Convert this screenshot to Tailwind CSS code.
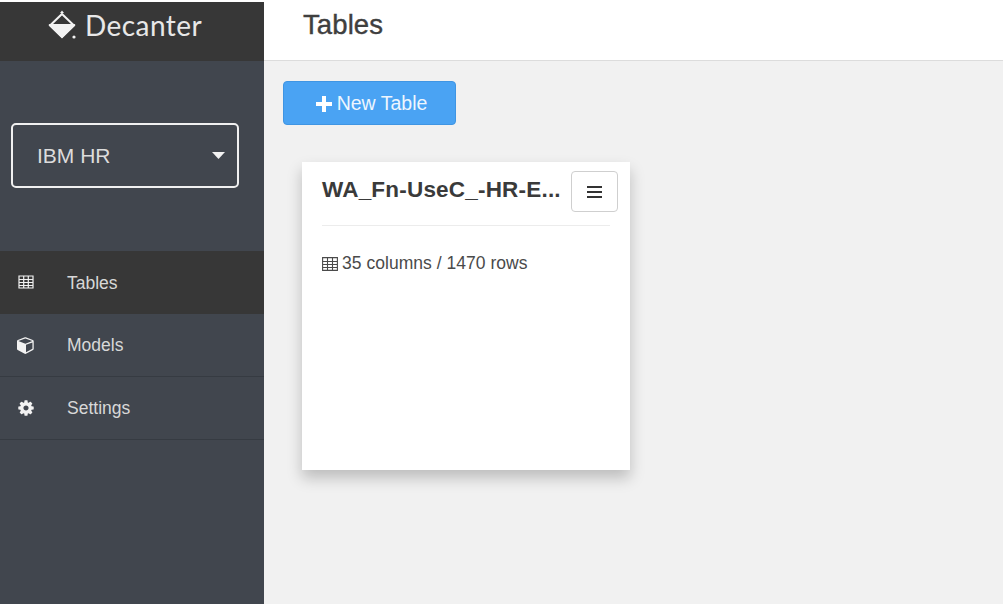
<!DOCTYPE html>
<html lang="en">
<head>
  <meta charset="UTF-8">
  <title>Tables | Decanter</title>
  <script src="https://cdn.jsdelivr.net/npm/@tailwindcss/browser@4"></script>
</head>
<body class="bg-white font-['Liberation_Sans',Arial,sans-serif] text-[#3a3a3a] overflow-hidden">
  <div class="flex h-[604px] pt-[2px]">

    <!-- Sidebar -->
    <aside class="w-[264px] shrink-0 flex flex-col bg-[#41464e] text-[#e4e4e4]">
      <div class="h-[59px] bg-[#373737] flex items-center pl-[47px] gap-[6px] pb-[14px]">
        <svg class="w-[32px] h-[30px]" viewBox="0 0 32 30">
          <path d="M15 4 L27 15.500 L15 27 L3 15.500 Z" fill="none" stroke="#f2f2f2" stroke-width="2"/>
          <path d="M1.500 14 H28.500 L15 28 Z" fill="#f2f2f2"/>
          <path d="M13 3 H17 L15 0.500 Z" fill="#f2f2f2"/>
          <circle cx="27" cy="27" r="1.600" fill="#f2f2f2"/>
        </svg>
        <span class="font-['Lato',sans-serif] text-[28px] leading-none text-[#e8e8e8] tracking-[0.45px]">Decanter</span>
      </div>

      <div class="pt-[62px] pl-[11px] pr-[25px] pb-[63px]">
        <div class="h-[65px] border-2 border-[#f0f0f0] rounded-[5px] flex items-center justify-between pl-[24px] pr-[12px]">
          <span class="text-[21px] text-[#dcdcdc]">IBM HR</span>
          <svg class="w-[13px] h-[7px]" viewBox="0 0 13 7"><path d="M0 0 H13 L6.500 7 Z" fill="#f2f2f2"/></svg>
        </div>
      </div>

      <nav class="text-[17.500px] text-[#d8d8d8]">
        <a class="h-[63px] bg-[#373737] flex items-center pl-[18px] gap-[33px]">
          <svg class="w-[16px] h-[14px] -mt-[1px]" viewBox="0 0 16 14"><path d="M1 1 H15 V13 H1 Z M1 4.500 H15 M1 7.500 H15 M1 10.500 H15 M5.700 1 V13 M10.300 1 V13" fill="none" stroke="#f2f2f2" stroke-width="1.200"/></svg>
          <span class="pt-[1px]">Tables</span>
        </a>
        <a class="h-[63px] border-b border-[#363b42] flex items-center pl-[18px] gap-[33px]">
          <svg class="w-[18px] h-[18px] -ml-[1px] -mr-[1px]" viewBox="0 0 1792 1792" fill="#f2f2f2"><path d="M896 1629l640-349v-636l-640 233v752zm-64-865l698-254-698-254-698 254zm832-252v768q0 35-18 65t-50 47l-704 384q-28 16-61 16t-61-16l-704-384q-32-17-50-47t-18-65v-768q0-40 23-73t61-49l704-256q22-8 44-8t44 8l704 256q38 16 61 49t23 73z"/></svg>
          <span class="pt-[1px]">Models</span>
        </a>
        <a class="h-[63px] border-b border-[#363b42] flex items-center pl-[18px] gap-[33px]">
          <svg class="w-[18px] h-[18px] -ml-[1px] -mr-[1px]" viewBox="0 0 1792 1792" fill="#f2f2f2"><path d="M1152 896q0-106-75-181t-181-75-181 75-75 181 75 181 181 75 181-75 75-181zm512-109v222q0 12-8 23t-20 13l-185 28q-19 54-39 91 35 50 107 138 10 12 10 25t-9 23q-27 37-99 108t-94 71q-12 0-26-9l-138-108q-44 23-91 38-16 136-29 186-7 28-36 28h-222q-14 0-24.500-8.500t-11.500-21.500l-28-184q-49-16-90-37l-141 107q-10 9-25 9-14 0-25-11-126-114-165-168-7-10-7-23 0-12 8-23 15-21 51-66.500t54-70.500q-27-50-41-99l-183-27q-13-2-21-12.500t-8-23.500v-222q0-12 8-23t19-13l186-28q14-46 39-92-40-57-107-138-10-12-10-24 0-10 9-23 26-36 98.500-107.500t94.500-71.500q13 0 26 10l138 107q44-23 91-38 16-136 29-186 7-28 36-28h222q14 0 24.500 8.500t11.500 21.500l28 184q49 16 90 37l142-107q9-9 24-9 13 0 25 10 129 119 165 170 7 8 7 22 0 12-8 23-15 21-51 66.500t-54 70.500q26 50 41 98l183 28q13 2 21 12.500t8 23.500z"/></svg>
          <span class="pt-[1px]">Settings</span>
        </a>
      </nav>
    </aside>

    <!-- Main -->
    <main class="flex-1 flex flex-col -mt-[2px]">
      <header class="h-[61px] shrink-0 bg-white border-b border-[#dcdcdc] flex items-center pl-[39px] pb-[10px]">
        <h1 class="text-[27.500px] leading-none text-[#3f3f3f] [-webkit-text-stroke:0.4px_#3f3f3f] tracking-[0.1px]">Tables</h1>
      </header>

      <div class="flex-1 bg-[#f1f1f1] pt-[20px] pl-[19px]">
        <button class="w-[173px] h-[44px] bg-[#4aa3f3] border border-[#3f95e3] rounded-[4px] flex items-center justify-center gap-[5px] pl-[4px] pt-[1px] text-[19.500px] text-[#eef6fe]">
          <svg class="w-[16px] h-[16px]" viewBox="0 0 16 16"><path d="M6 0 H10 V6 H16 V10 H10 V16 H6 V10 H0 V6 H6 Z" fill="#fff"/></svg>
          <span>New Table</span>
        </button>

        <section class="ml-[19px] mt-[37px] w-[328px] h-[308px] bg-white pt-[9px] pl-[20px] pr-[12px] shadow-[0_8px_14px_rgba(0,0,0,0.22)]">
          <div class="flex items-start justify-between">
            <h2 class="text-[22.500px] font-bold leading-none mt-[8px] text-[#3a3a3a] tracking-[0.2px]">WA_Fn-UseC_-HR-E...</h2>
            <button class="w-[47px] h-[41px] bg-white border border-[#cfcfcf] rounded-[4px] flex items-center justify-center">
              <svg class="w-[15px] h-[12px]" viewBox="0 0 15 12"><path d="M0 1 H15 M0 6 H15 M0 11 H15" stroke="#333" stroke-width="2"/></svg>
            </button>
          </div>
          <hr class="mt-[13px] mr-[8px] border-[#ececec]">
          <div class="mt-[29px] flex items-center gap-[4px] text-[17.500px] leading-none text-[#4a4a4a]">
            <svg class="w-[16px] h-[14px]" viewBox="0 0 16 14"><path d="M0.600 0.600 H15.400 V13.400 H0.600 Z M0.600 4.500 H15.400 M0.600 7.500 H15.400 M0.600 10.500 H15.400 M5.500 0.600 V13.400 M10.500 0.600 V13.400" fill="none" stroke="#4a4a4a" stroke-width="1.100"/></svg>
            <span class="tracking-[0.03px]">35 columns / 1470 rows</span>
          </div>
        </section>
      </div>
    </main>
  </div>
</body>
</html>
